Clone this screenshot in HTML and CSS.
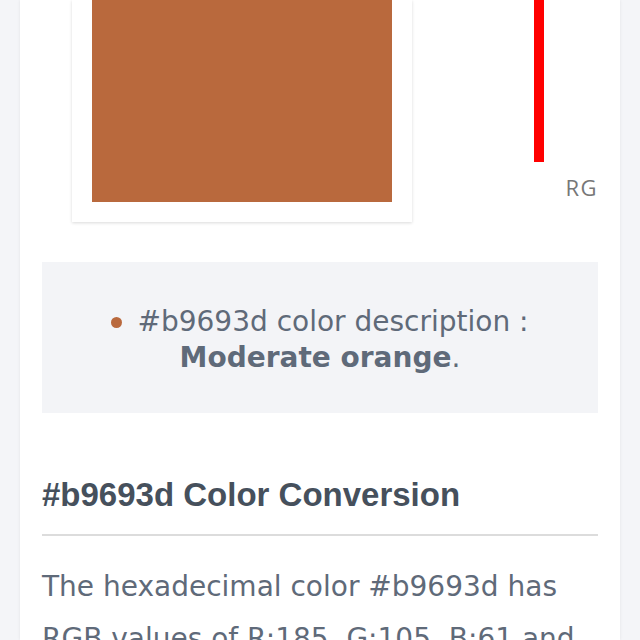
FILE: index.html
```html
<!DOCTYPE html>
<html>
<head>
<meta charset="utf-8">
<link rel="stylesheet" href="styles.css">
</head>
<body>
<div class="card">
  <div class="top">
    <div class="frame"><div class="swatch"></div></div>
    <div class="chart">
      <div class="bar"></div>
      <div class="label">RG</div>
    </div>
  </div>
  <div class="desc">
    <span class="dot"></span>#b9693d color description :<br><b>Moderate orange</b>.
  </div>
  <h2 class="heading">#b9693d Color Conversion</h2>
  <p class="text">The hexadecimal color #b9693d has RGB values of R:185, G:105, B:61 and</p>
</div>
</body>
</html>
```
FILE: styles.css
```css
html, body {
  margin: 0;
  padding: 0;
  background: #f4f5f8;
  height: 640px;
  overflow: hidden;
}
.card {
  margin: 0 20px;
  padding: 0 22px;
  background: #fff;
  box-shadow: 0 0 3px rgba(0,0,0,0.08);
  height: 640px;
  overflow: hidden;
}
.top {
  display: flex;
}
.frame {
  margin-left: 30px;
  width: 300px;
  padding: 0 20px 20px;
  background: #fff;
  box-shadow: 0 1px 3px rgba(0,0,0,0.15);
}
.swatch {
  width: 300px;
  height: 202px;
  background: #b9693d;
}
.chart {
  flex: 1;
  display: flex;
  flex-direction: column;
}
.bar {
  margin-left: 122px;
  width: 10px;
  height: 162px;
  background: #ff0000;
}
.label {
  align-self: flex-end;
  margin-top: 11px;
  font-family: "Open Sans", sans-serif;
  font-size: 22px;
  line-height: 28px;
  letter-spacing: 1.5px;
  color: #777;
}
.desc {
  margin-top: 40px;
  background: #f3f4f7;
  padding: 42px 0 37px;
  text-align: center;
  font-family: "DejaVu Sans", sans-serif;
  font-size: 28px;
  line-height: 36px;
  color: #5f6a79;
}
.desc b {
  font-weight: bold;
}
.dot {
  display: inline-block;
  width: 11px;
  height: 11px;
  border-radius: 50%;
  background: #b9693d;
  margin-right: 15px;
  vertical-align: 3px;
}
.heading {
  margin: 62px 0 0;
  padding-bottom: 19px;
  border-bottom: 2px solid #dcdcdc;
  font-family: "Liberation Sans", Arial, sans-serif;
  font-size: 33px;
  line-height: 40px;
  font-weight: bold;
  color: #46505c;
}
.text {
  margin: 25px 0 0;
  font-family: "DejaVu Sans", sans-serif;
  font-size: 28px;
  line-height: 52px;
  color: #5f6a79;
}
```
